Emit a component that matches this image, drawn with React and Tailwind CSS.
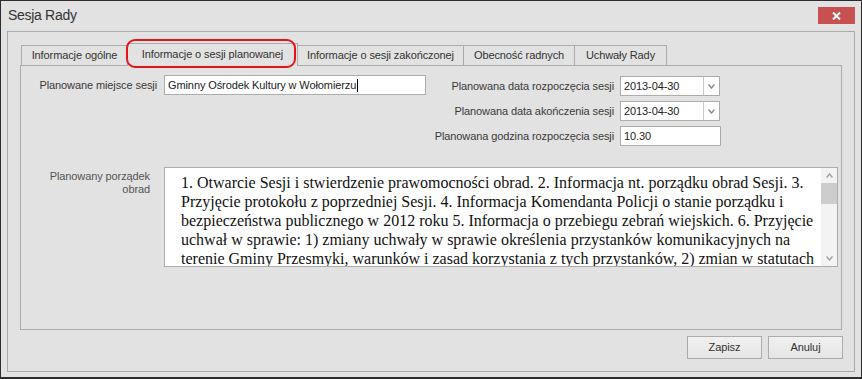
import React from "react";

const ui = { fontFamily: '"Liberation Sans", Arial, sans-serif' };
const serif = { fontFamily: '"Liberation Serif", "Times New Roman", serif' };

const tabs = [
  { label: "Informacje ogólne", w: "w-[107px]" },
  { label: "Informacje o sesji planowanej", w: "w-[171px]", active: true },
  { label: "Informacje o sesji zakończonej", w: "w-[167px]" },
  { label: "Obecność radnych", w: "w-[112px]" },
  { label: "Uchwały Rady", w: "w-[93px]" },
];

const agenda = [
  "1. Otwarcie Sesji i stwierdzenie prawomocności obrad. 2. Informacja nt. porządku obrad Sesji. 3.",
  "Przyjęcie protokołu z poprzedniej Sesji. 4. Informacja Komendanta Policji o stanie porządku i",
  "bezpieczeństwa publicznego w 2012 roku 5. Informacja o przebiegu zebrań wiejskich. 6. Przyjęcie",
  "uchwał w sprawie: 1) zmiany uchwały w sprawie określenia przystanków komunikacyjnych na",
  "terenie Gminy Przesmyki, warunków i zasad korzystania z tych przystanków, 2) zmian w statutach",
];

function Chevron({ up = false, color = "#8a8a8a" }) {
  return (
    <svg width="7" height="5" viewBox="0 0 7 5">
      <polyline
        points={up ? "0.5,4.5 3.5,1 6.5,4.5" : "0.5,0.5 3.5,4 6.5,0.5"}
        fill="none"
        stroke={color}
        strokeWidth="1.4"
      />
    </svg>
  );
}

function DateField({ value }) {
  return (
    <div className="flex w-[100px] h-[20px] bg-white border border-[#acacac]">
      <div className="flex-1 flex items-center pl-[3px] text-[#222]">{value}</div>
      <div className="w-[16px] border-l border-[#c8c8c8] flex items-center justify-center">
        <Chevron />
      </div>
    </div>
  );
}

function FieldRow({ label, children }) {
  return (
    <div className="flex items-center h-[20px]">
      <div className="w-[194px] text-right pr-[6px] text-[#3a3a3a] whitespace-nowrap">{label}</div>
      {children}
    </div>
  );
}

export default function App() {
  return (
    <div
      className="w-[862px] h-[379px] bg-[#e2e2e2] border border-b-2 border-[#2d2d2d] flex flex-col text-[11px] tracking-[-0.1px] overflow-hidden"
      style={ui}
    >
      {/* Title bar */}
      <div className="h-[30px] flex items-start justify-between pl-[7px] pr-[6px]">
        <span className="text-[14px] tracking-[-0.3px] text-[#333] mt-[6px] leading-[17px]">Sesja Rady</span>
        <button
          type="button"
          className="mt-[6px] w-[37px] h-[17px] bg-[#c75050] flex items-center justify-center"
        >
          <svg width="9" height="8" viewBox="0 0 9 8">
            <path d="M1 0.5 L8 7.5 M8 0.5 L1 7.5" stroke="white" strokeWidth="2" />
          </svg>
        </button>
      </div>

      {/* Frame */}
      <div className="mx-[6px] mb-[5px] h-[341px] border border-[#aaaaaa] pl-[12px] pr-[12px] pt-[11px] flex flex-col">
        {/* Tabs */}
        <div className="relative flex items-end h-[22px] ml-[1px]">
          {tabs.map((t) => (
            <div
              key={t.label}
              className={
                "-ml-px first:ml-0 flex items-center justify-center border border-[#acacac] text-[#333] whitespace-nowrap " +
                t.w +
                (t.active
                  ? " relative z-10 h-[23px] -mb-px border-b-0 bg-[#e2e2e2] pb-[2px]"
                  : " h-[20px] border-b-0 bg-[#e2e2e2]")
              }
            >
              {t.label}
            </div>
          ))}
          {/* red highlight drawn over the active tab */}
          <div className="absolute left-[105px] top-[-4px] w-[170px] h-[29px] border-[2.5px] border-[#e5141b] rounded-[9px] z-20 pointer-events-none" />
        </div>

        {/* Panel */}
        <div className="h-[265px] border border-[#acacac] pt-[9px] flex flex-col">
          <div className="flex">
            <div className="flex items-center h-[20px]">
              <div className="w-[143px] text-right pr-[7px] text-[#3a3a3a] whitespace-nowrap">
                Planowane miejsce sesji
              </div>
              <div className="w-[262px] h-[20px] bg-white border border-[#acacac] flex items-center pl-[3px] text-[#222]">
                Gminny Ośrodek Kultury w Wołomierzu
                <span className="inline-block w-px h-[13px] bg-black ml-px" />
              </div>
            </div>
            <div className="mt-[1px] flex flex-col gap-[5px]">
              <FieldRow label="Planowana data rozpoczęcia sesji">
                <DateField value="2013-04-30" />
              </FieldRow>
              <FieldRow label="Planowana data akończenia sesji">
                <DateField value="2013-04-30" />
              </FieldRow>
              <FieldRow label="Planowana godzina rozpoczęcia sesji">
                <div className="w-[101px] h-[20px] bg-white border border-[#acacac] flex items-center pl-[3px] text-[#222]">
                  10.30
                </div>
              </FieldRow>
            </div>
          </div>

          <div className="flex mt-[21px]">
            <div className="w-[143px] text-right pr-[14px] pt-[3px] leading-[13px] text-[#555]">
              Planowany porządek
              <br />
              obrad
            </div>
            <div className="w-[674px] h-[100px] bg-white border border-[#acacac] flex">
              <div
                className="flex-1 pl-[16px] pt-[5px] text-[16px] leading-[19px] tracking-normal text-[#111] overflow-hidden"
                style={serif}
              >
                {agenda.map((line) => (
                  <div key={line} className="whitespace-nowrap">
                    {line}
                  </div>
                ))}
              </div>
              <div className="w-[16px] bg-[#f3f3f3] flex flex-col items-center">
                <div className="h-[15px] flex items-center justify-center">
                  <Chevron up color="#a0a0a0" />
                </div>
                <div className="w-[16px] h-[21px] bg-[#cdcdcd]" />
                <div className="flex-1" />
                <div className="h-[15px] flex items-center justify-center">
                  <Chevron color="#a0a0a0" />
                </div>
              </div>
            </div>
          </div>
        </div>

        {/* Buttons */}
        <div className="flex justify-end gap-[6px] mt-[6px] -mr-px">
          <button
            type="button"
            className="w-[75px] h-[23px] border border-[#acacac] bg-gradient-to-b from-[#f0f0f0] to-[#e6e6e6] text-[#333]"
          >
            Zapisz
          </button>
          <button
            type="button"
            className="w-[75px] h-[23px] border border-[#acacac] bg-gradient-to-b from-[#f0f0f0] to-[#e6e6e6] text-[#333]"
          >
            Anuluj
          </button>
        </div>
      </div>
    </div>
  );
}
